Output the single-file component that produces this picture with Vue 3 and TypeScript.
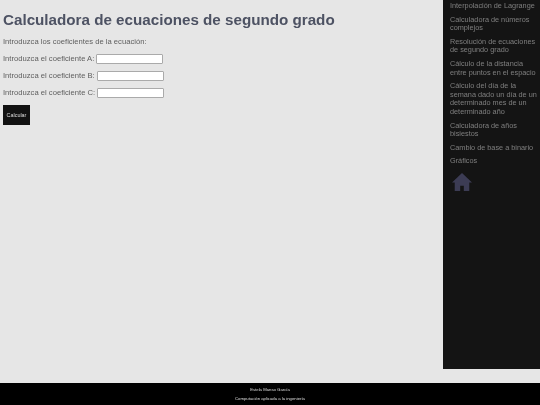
<script setup lang="ts">
const links: string[] = [
  'Interpolación de Lagrange',
  'Calculadora de números complejos',
  'Resolución de ecuaciones de segundo grado',
  'Cálculo de la distancia entre puntos en el espacio',
  'Cálculo del día de la semana dado un día de un determinado mes de un determinado año',
  'Calculadora de años bisiestos',
  'Cambio de base a binario',
  'Gráficos'
]
const coefs: string[] = ['A', 'B', 'C']
</script>

<template>
  <div class="page">
    <div class="top">
      <main class="content">
        <h1>Calculadora de ecuaciones de segundo grado</h1>
        <p class="intro">Introduzca los coeficientes de la ecuación:</p>
        <form class="form" @submit.prevent>
          <label v-for="c in coefs" :key="c" class="row">
            <span>Introduzca el coeficiente {{ c }}:</span>
            <input type="text" class="field" />
          </label>
          <button type="submit" class="btn">Calcular</button>
        </form>
      </main>
      <nav class="side">
        <a v-for="l in links" :key="l" class="link">{{ l }}</a>
        <svg class="home" viewBox="0 0 24 22" width="22" height="20">
          <path d="M12 1 1 11.5h3V21h6v-6h4v6h6v-9.5h3z" fill="#3c3c54" />
        </svg>
      </nav>
    </div>
    <footer class="foot">
      <p>Estela Manso García</p>
      <p>Computación aplicada a la ingeniería</p>
    </footer>
  </div>
</template>

<style>
html, body { margin: 0; padding: 0; background: #e6e6e6; }
</style>

<style scoped>
.page {
  width: 540px;
  height: 405px;
  display: flex;
  flex-direction: column;
  font-family: "Liberation Sans", Arial, sans-serif;
  background: #e6e6e6;
  overflow: hidden;
}
.top {
  display: flex;
  height: 369px;
  justify-content: space-between;
  margin-bottom: 14px;
}
.content { padding: 0 3px; flex: 1; opacity: 0.999; }
h1 {
  margin: 10px 0 0;
  font-size: 15.2px;
  line-height: 19px;
  font-weight: 700;
  color: #4d5263;
}
.intro {
  margin: 8px 0 0;
  font-size: 7.65px;
  line-height: 10px;
  color: #5f5f5f;
}
.form { display: flex; flex-direction: column; align-items: flex-start; margin-top: 3px; }
.row {
  display: flex;
  align-items: center;
  gap: 2px;
  height: 17px;
  font-size: 7.65px;
  color: #5f5f5f;
}
.field {
  box-sizing: border-box;
  width: 67px;
  height: 10px;
  padding: 0;
  border: 1px solid #aaa;
  border-radius: 1px;
  background: #fff;
}
.btn {
  margin-top: 4px;
  width: 27px;
  height: 20px;
  padding: 0;
  border: 0;
  background: #111;
  color: #ddd;
  font-family: inherit;
  font-size: 5.4px;
  filter: grayscale(1);
}
.side {
  box-sizing: border-box;
  width: 97px;
  height: 369px;
  background: #141414;
  padding: 2px 1px 0 7px;
  display: flex;
  flex-direction: column;
  gap: 5px;
}
.link {
  font-size: 7.3px;
  line-height: 8.6px;
  color: #7f7f7f;
  filter: grayscale(1);
}
.home { margin: 1px 0 0 1px; }
.foot {
  flex: 1;
  background: #000;
  padding-top: 4px;
  color: #ddd;
  text-align: center;
  font-size: 4.25px;
}
.foot p { margin: 0 0 4px; line-height: 5px; filter: grayscale(1); }
</style>
